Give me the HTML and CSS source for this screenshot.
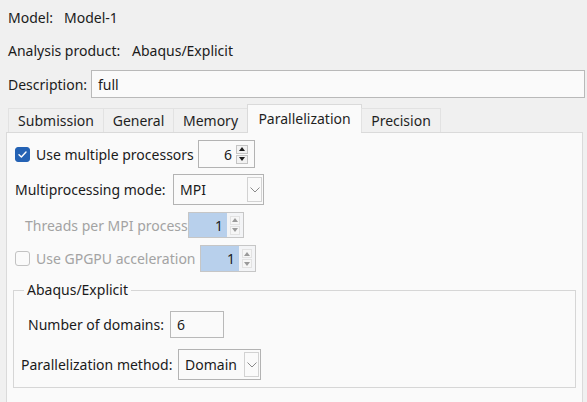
FILE: index.html
```html
<!DOCTYPE html>
<html>
<head>
<meta charset="utf-8">
<link rel="stylesheet" href="styles.css">
</head>
<body>
<div class="dialog">
  <div class="info row-model"><span class="lbl lbl-model">Model:</span><span>Model-1</span></div>
  <div class="info row-product"><span class="lbl lbl-product">Analysis product:</span><span>Abaqus/Explicit</span></div>
  <div class="desc"><span class="lbl lbl-desc">Description:</span><div class="textbox desc-box">full</div></div>

  <div class="tabs">
    <div class="tab t-sub">Submission</div>
    <div class="tab t-gen">General</div>
    <div class="tab t-mem">Memory</div>
    <div class="tab t-par active">Parallelization</div>
    <div class="tab t-pre">Precision</div>
  </div>

  <div class="panel">
    <div class="prow r-multi">
      <span class="check checked"><svg width="15" height="15" viewBox="0 0 15 15"><polyline points="4,7.8 6.4,10 11,5" fill="none" stroke="#fff" stroke-width="1.4" stroke-linecap="round" stroke-linejoin="round"/></svg></span>
      <span class="lbl lbl-multi">Use multiple processors</span>
      <div class="spin sp-multi">
        <span class="val">6</span>
        <span class="arrows"><span class="ab"><i class="up"></i></span><span class="ab"><i class="dn"></i></span></span>
      </div>
    </div>

    <div class="prow r-mode">
      <span class="lbl lbl-mode">Multiprocessing mode:</span>
      <div class="combo cb-mode">
        <span class="cval">MPI</span>
        <span class="drop"><svg width="10" height="6" viewBox="0 0 10 6"><polyline points="0.5,0.5 5,5 9.5,0.5" fill="none" stroke="#8a8a8a" stroke-width="1"/></svg></span>
      </div>
    </div>

    <div class="prow r-threads disabled">
      <span class="lbl lbl-threads">Threads per MPI process</span>
      <div class="spin dis sp-threads">
        <span class="val">1</span>
        <span class="arrows"><span class="ab"><i class="up"></i></span><span class="ab"><i class="dn"></i></span></span>
      </div>
    </div>

    <div class="prow r-gpu disabled">
      <span class="check"></span>
      <span class="lbl lbl-gpu">Use GPGPU acceleration</span>
      <div class="spin dis sp-gpu">
        <span class="val">1</span>
        <span class="arrows"><span class="ab"><i class="up"></i></span><span class="ab"><i class="dn"></i></span></span>
      </div>
    </div>

    <fieldset class="group">
      <legend>Abaqus/Explicit</legend>
      <div class="grow r-dom">
        <span class="lbl lbl-dom">Number of domains:</span>
        <div class="textbox dom-box">6</div>
      </div>
      <div class="grow r-meth">
        <span class="lbl lbl-meth">Parallelization method:</span>
        <div class="combo cb-meth">
          <span class="cval">Domain</span>
          <span class="drop"><svg width="10" height="6" viewBox="0 0 10 6"><polyline points="0.5,0.5 5,5 9.5,0.5" fill="none" stroke="#8a8a8a" stroke-width="1"/></svg></span>
        </div>
      </div>
    </fieldset>
  </div>
</div>
</body>
</html>
```

FILE: styles.css
```css
* { box-sizing: border-box; }
html, body { margin: 0; padding: 0; }
body { background: #f0f0f0; }

.dialog {
  width: 587px;
  height: 402px;
  overflow: hidden;
  background: #f0f0f0;
  font-family: "Noto Sans", "Open Sans", sans-serif;
  font-size: 14px;
  color: #1b1b1b;
}

.lbl { display: inline-block; white-space: nowrap; flex: none; }

.info { display: flex; align-items: center; padding-left: 8px; }
.row-model { height: 34px; }
.row-product { height: 32px; }
.lbl-model { width: 56px; }
.lbl-product { width: 124px; }

.desc { display: flex; align-items: center; height: 28px; margin-top: 4px; padding-left: 8px; padding-right: 2px; }
.lbl-desc { width: 83px; }

.textbox {
  display: flex;
  align-items: center;
  background: #fafafa;
  border: 1px solid #b9b9b9;
  padding-left: 6px;
}
.desc-box { flex: 1; height: 28px; }

.tabs {
  display: flex;
  align-items: flex-end;
  height: 28px;
  margin-top: 6px;
  padding-left: 8px;
  position: relative;
  z-index: 1;
}
.tab {
  height: 24px;
  display: flex;
  align-items: center;
  justify-content: center;
  background: #f0f0f0;
  border: 1px solid #e2e2e2;
  border-bottom: none;
  margin-right: -1px;
  color: #1f1f1f;
}
.tab.active {
  height: 29px;
  margin-bottom: -1px;
  background: #fafafa;
  border-color: #dadada;
  padding-bottom: 2px;
}
.t-sub { width: 96px; }
.t-gen { width: 71px; }
.t-mem { width: 75px; }
.t-par { width: 115px; }
.t-pre { width: 80px; }

.panel {
  margin-left: 6px;
  width: 577px;
  height: 290px;
  background: #fafafa;
  border: 1px solid #dadada;
  padding-left: 8px;
}

.prow { display: flex; align-items: center; }
.r-multi { height: 28px; margin-top: 7px; }
.r-mode { height: 31px; margin-top: 6px; }
.r-threads { height: 26px; margin-top: 7px; padding-left: 10px; }
.r-gpu { height: 27px; margin-top: 7px; }

.disabled { color: #a3a3a3; }

.check {
  width: 15px;
  height: 15px;
  border-radius: 3px;
  border: 1px solid #c2c2c2;
  background: #fafafa;
  margin-right: 6px;
  flex: none;
  display: flex;
}
.check.checked { background: #2462b4; border-color: #2462b4; }
.check svg { margin: -1px; }

.lbl-multi { width: 162px; }
.lbl-mode { width: 158px; }
.lbl-threads { width: 163px; }
.lbl-gpu { width: 164px; }

.spin {
  display: flex;
  align-items: center;
  background: #fafafa;
  border: 1px solid #b3b3b3;
  flex: none;
}
.sp-multi { width: 57px; height: 28px; }
.sp-threads { width: 56px; height: 26px; }
.sp-gpu { width: 56px; height: 27px; }
.spin .val { flex: 1; text-align: right; padding-right: 4px; color: #1b1b1b; }
.spin .arrows { display: flex; flex-direction: column; gap: 1px; width: 12px; margin-right: 6px; }
.spin .ab {
  height: 9px;
  border: 1px solid #c4c4c4;
  background: #f2f2f2;
  display: flex;
  align-items: center;
  justify-content: center;
}
.spin i { width: 0; height: 0; border-left: 3.5px solid transparent; border-right: 3.5px solid transparent; }
.spin i.up { border-bottom: 4px solid #1e1e1e; }
.spin i.dn { border-top: 4px solid #1e1e1e; }

.spin.dis { border-color: #c6c6c6; background: #f3f4f6; }
.spin.dis .val { background: #b8d0ec; align-self: stretch; display: flex; align-items: center; justify-content: flex-end; color: #1b1b1b; margin: 0; padding-right: 4px; }
.spin.dis .arrows { margin: 0 3px 0 3px; width: 10px; }
.spin.dis .ab { border-color: #e2e2e2; background: #f6f6f6; }
.spin.dis i.up { border-bottom-color: #9a9a9a; }
.spin.dis i.dn { border-top-color: #9a9a9a; }

.combo {
  display: flex;
  align-items: center;
  background: #fafafa;
  border: 1px solid #b3b3b3;
  flex: none;
  padding: 2px 1px 2px 6px;
}
.cb-mode { width: 91px; height: 31px; }
.cb-meth { width: 83px; height: 31px; }
.combo .cval { flex: 1; }
.combo .drop {
  width: 15px;
  align-self: stretch;
  border: 1px solid #d2d2d2;
  display: flex;
  align-items: center;
  justify-content: center;
  background: #fafafa;
}

.group {
  margin: 8px 0 0 -2px;
  width: 563px;
  height: 108px;
  border: 1px solid #d6d6d6;
  padding: 11px 0 0 7px;
}
.group legend {
  padding: 0 3px;
  margin-left: 3px;
  line-height: 20px;
}
.grow { display: flex; align-items: center; }
.r-dom { height: 27px; padding-left: 7px; }
.r-meth { height: 31px; margin-top: 11px; }
.lbl-dom { width: 142px; }
.lbl-meth { width: 157px; }
.dom-box { width: 54px; height: 27px; }
```
